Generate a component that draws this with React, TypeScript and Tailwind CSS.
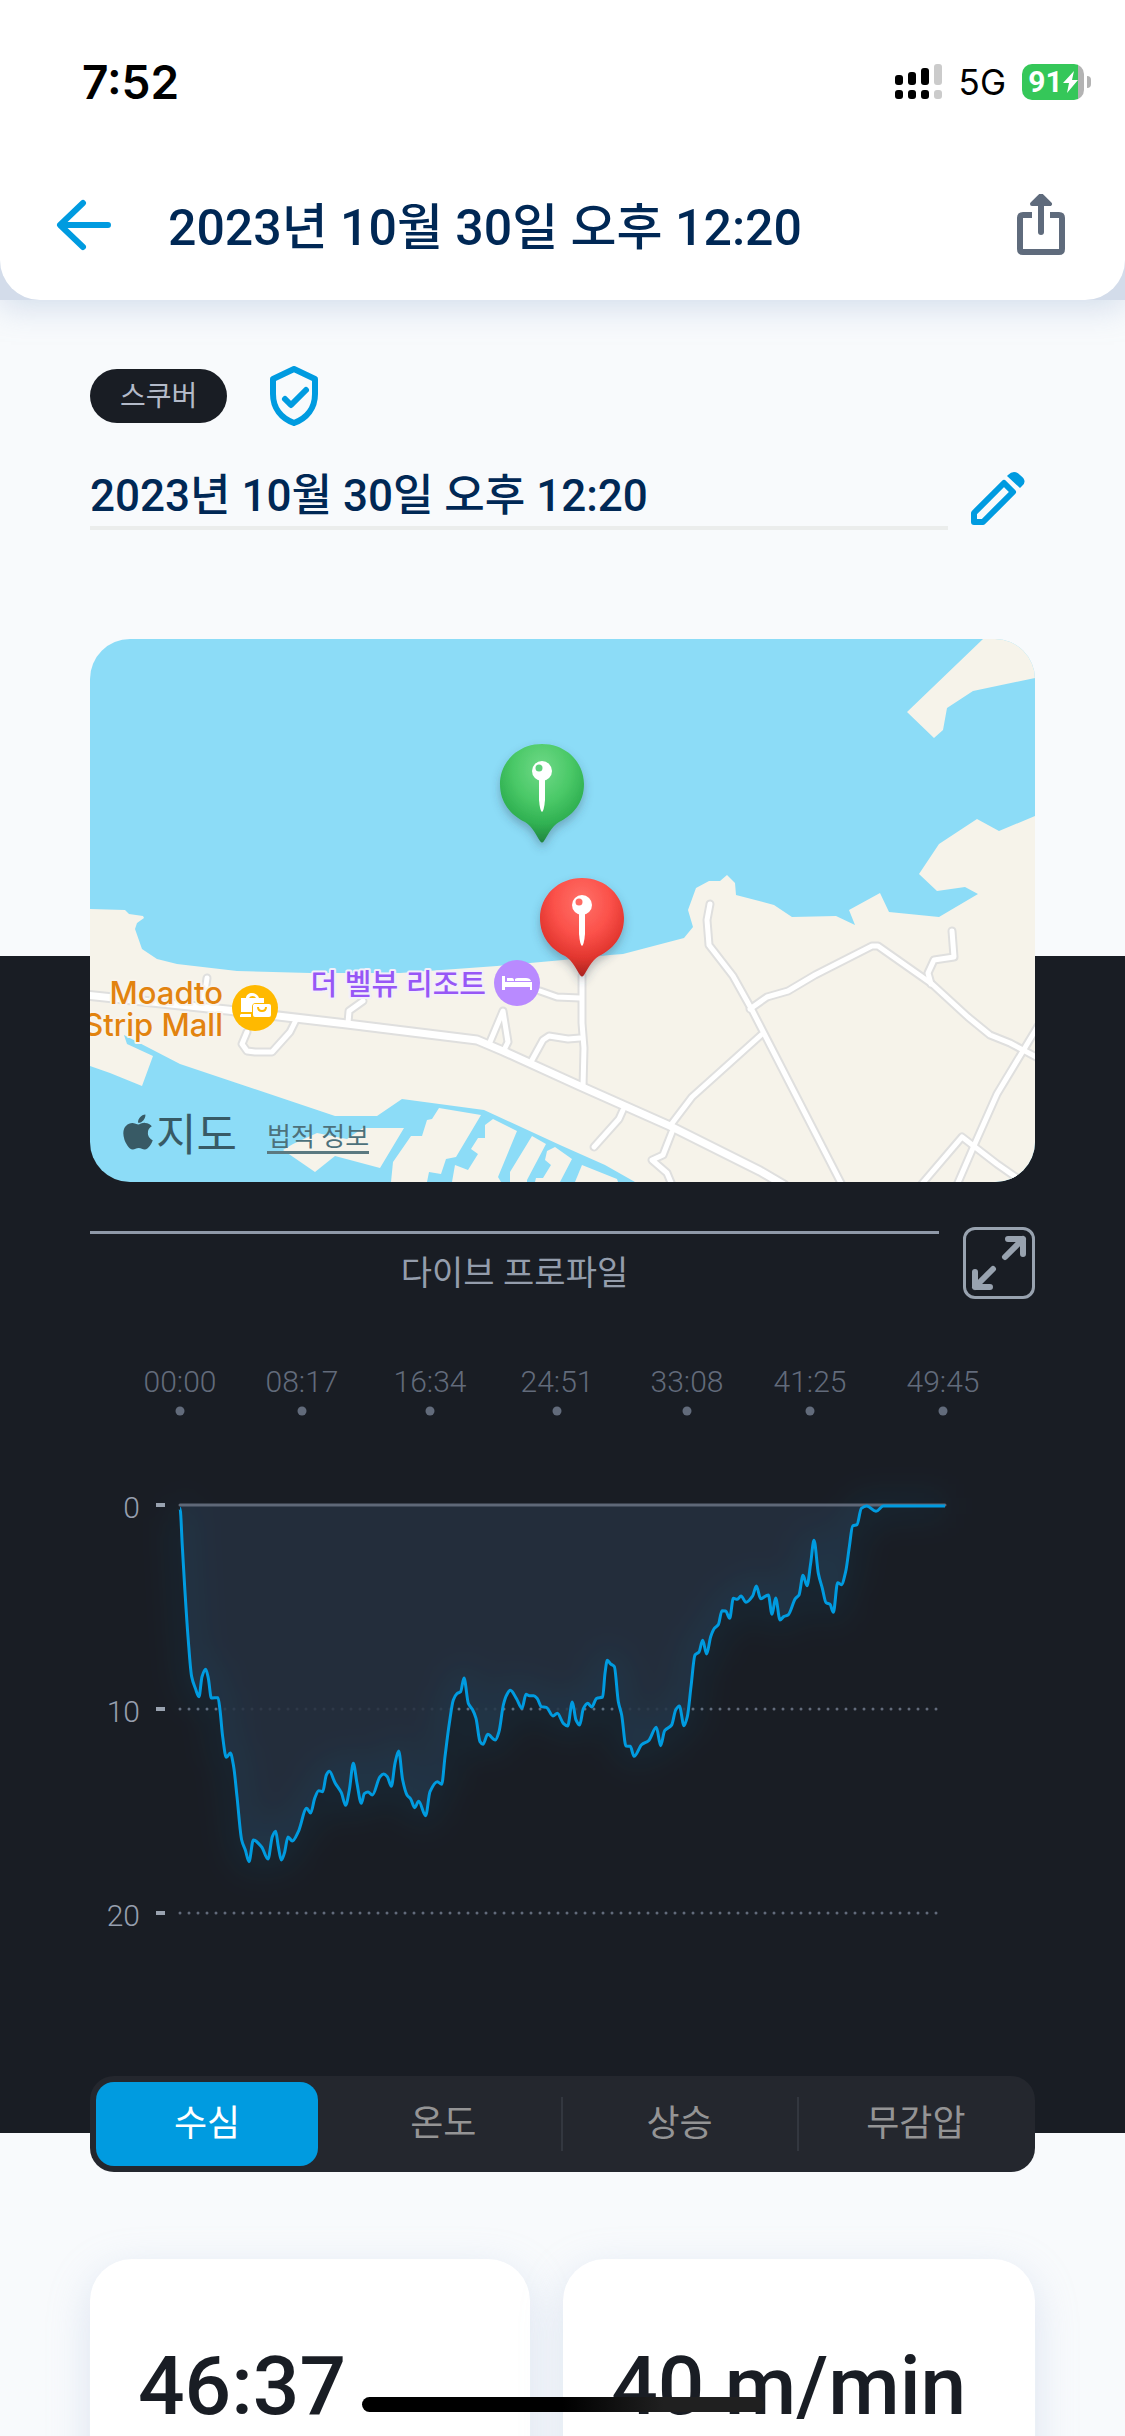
import React, { useState } from 'react';
import { FaApple } from 'react-icons/fa';
import clsx from 'clsx';

const TABS = [
  { id: 'depth', label: '수심' },
  { id: 'temp', label: '온도' },
  { id: 'ascent', label: '상승' },
  { id: 'ndl', label: '무감압' },
];

const TIMES = [
  { x: 90, label: '00:00' },
  { x: 212, label: '08:17' },
  { x: 340, label: '16:34' },
  { x: 467, label: '24:51' },
  { x: 597, label: '33:08' },
  { x: 720, label: '41:25' },
  { x: 853, label: '49:45' },
];

const DEPTHS = [
  { y: 145, label: '0' },
  { y: 349, label: '10' },
  { y: 553, label: '20' },
];

// Dive samples as x,y pairs on a grid three times finer than the plot
const SAMPLES = `270,115 277,230 284,350 294,500 305,620 316,655 327,680 336,620 347,598 355,625 364,684 384,683
390,720 398,800 409,862 421,849 431,890 441,980 455,1110 466,1140 477,1175 490,1110 515,1131 534,1167 547,1100
557,1084 565,1130 574,1170 583,1150 594,1101 607,1113 625,1085 650,1015 662,1029 674,985 686,962 698,965 709,915
718,904 735,938 754,968 767,1006 778,960 790,880 801,940 814,1000 823,971 834,966 847,975 870,920 881,912 892,920
904,949 915,880 926,843 938,930 951,975 962,987 974,1013 986,994 1007,1037 1020,965 1042,935 1055,943 1065,860
1078,760 1090,690 1101,671 1112,665 1122,624 1135,700 1147,718 1158,745 1170,815 1179,823 1193,793 1216,810
1227,785 1240,705 1250,675 1261,661 1280,687 1296,715 1308,673 1318,677 1331,677 1342,686 1354,710 1369,712
1389,738 1402,730 1420,760 1433,768 1447,696 1458,750 1469,765 1480,716 1493,700 1505,711 1520,685 1538,681
1545,610 1552,571 1562,582 1573,590 1585,695 1595,735 1608,828 1621,829 1632,859 1655,824 1676,812 1699,772
1712,827 1724,782 1745,765 1757,720 1768,708 1782,767 1792,740 1803,650 1815,555 1827,546 1838,511 1850,552
1862,500 1873,475 1885,464 1896,422 1907,423 1919,445 1930,385 1942,388 1953,378 1968,397 1988,378 1999,348
2012,386 2035,375 2046,433 2057,384 2070,450 2081,440 2095,434 2116,386 2127,375 2139,316 2151,347 2162,280
2172,211 2185,310 2197,355 2208,398 2220,403 2230,427 2243,338 2254,344 2267,305 2278,230 2288,168 2301,164
2314,115 2330,108 2358,124 2380,108 2565,108`
  .split(/\s+/)
  .map(pair => {
    const [x, y] = pair.split(',').map(Number);
    return [x / 3, y / 3 + 110];
  });

// Horizontal tangents at the peaks, sloped elsewhere
function smoothPath(pts: number[][]) {
  const slope = pts.map((p, i) => {
    if (i === 0 || i === pts.length - 1) return 0;
    const a = pts[i - 1];
    const b = pts[i + 1];
    const s1 = (p[1] - a[1]) / (p[0] - a[0]);
    const s2 = (b[1] - p[1]) / (b[0] - p[0]);
    if (s1 * s2 <= 0) return 0;
    return (2 * s1 * s2) / (s1 + s2);
  });
  let d = `M${pts[0][0]} ${pts[0][1]}`;
  for (let i = 1; i < pts.length; i++) {
    const a = pts[i - 1];
    const b = pts[i];
    const h = (b[0] - a[0]) / 3;
    d += `C${a[0] + h} ${a[1] + slope[i - 1] * h} ${b[0] - h} ${b[1] - slope[i] * h} ${b[0]} ${b[1]}`;
  }
  return d;
}

const LINE = smoothPath(SAMPLES);

const LAND = [
  'M0 270L35 271L39 275L53 277L54 279L47 284L45 290L52 310L67 320L87 325L147 332L220 334L310 334L407 327L473 321L520 316L533 315L594 299L603 288L598 271L606 249L619 242L630 242L637 236L645 244L646 256L684 266L702 278L746 277L765 286L759 271L790 254L799 273L849 278L888 255L875 248L847 252L829 235L849 205L887 180L909 192L945 177V543H545L515 526L470 506L394 471L312 460L287 477H245L90 425L34 396L37 405L63 417L52 447L20 434L0 427Z',
  'M893 0L817 73L844 99L853 91L857 69L883 52L945 39V0Z',
  'M193 511L225 533L245 517L290 529L314 489H273L257 500L227 494L203 505Z',
  'M301 543L303 523L321 497H332L337 481L342 480L349 469L391 476L366 518L356 520L351 535L339 533L337 543Z',
  'M362 543L365 526L378 531L388 515L381 510L388 499H395V486L403 480L427 492L408 538L411 543Z',
  'M420 543V533L442 497L456 505L437 541V543Z',
  'M445 543L446 539H453L461 526L455 521L457 512L465 508L482 520L470 543Z',
  'M485 543L492 526L527 540L528 543Z',
];

const ROADS = [
  'M157 393L152 405L157 412L165 413H182L200 393L207 379',
  'M117 339L113 366',
  'M258 384L259 372L273 362',
  'M400 403L413 372L418 403L414 411',
  'M442 421L453 401L459 397L478 400L490 399',
  'M450 352L467 358L490 359',
  'M492 337V384L494 409L493 448',
  'M533 471L529 480L504 508',
  'M580 487L602 458L671 396',
  'M582 493L573 516L562 521L577 534L582 546',
  'M620 265L617 281L619 306L643 337L662 371L752 546',
  'M660 370L677 358L698 352L725 336L782 307H788L842 345L878 378L900 396L920 404L948 419',
  'M862 292L864 318L844 321L838 334L841 345',
  'M948 387L907 455L883 509L867 546',
  'M831 546L872 498L907 525L930 541',
];

const MAIN_ROAD = 'M-4 356L137 371L257 385L387 401L413 412L490 447L580 487L620 507L670 532L694 546';

const PIN = 'M0-42C24-42 42-24 42-2C42 17 31 29 17 36C9 41 6 49 2 55Q0 58-2 55C-6 49-9 41-17 36C-31 29-42 17-42-2C-42-24-24-42 0-42Z';

function MapPin({ x, y, fill, dot }: { x: number; y: number; fill: string; dot: string }) {
  return (
    <g transform={`translate(${x} ${y})`}>
      <path d={PIN} fill={fill} filter="url(#pinShadow)" />
      <circle cy="-15" r="10" fill="#fff" />
      <path d="M-3-8H3V14Q2 25 0 26Q-2 25-3 14Z" fill="#fff" />
      <circle cx="-3" cy="-18" r="3.500" fill={dot} />
    </g>
  );
}

function StatusBar() {
  return (
    <div className="flex h-[164px] items-center justify-between pl-[82px] pr-[34px] text-black">
      <span className="font-['Inter'] text-[46px] font-semibold">7:52</span>
      <div className="flex items-center gap-4">
        <svg viewBox="0 0 48 36" className="h-9 w-12">
          <g fill="#000">
            <rect x="0" y="11" width="8" height="10" rx="3" />
            <rect x="13" y="8" width="8" height="13" rx="3" />
            <rect x="26" y="4" width="8" height="17" rx="3" />
            <rect x="0" y="26" width="8" height="9" rx="3" />
            <rect x="13" y="26" width="8" height="9" rx="3" />
            <rect x="26" y="26" width="8" height="9" rx="3" />
          </g>
          <rect x="39" y="0" width="8" height="21" rx="3" fill="#cbcbcb" />
          <rect x="39" y="26" width="8" height="9" rx="3" fill="#cbcbcb" />
        </svg>
        <span className="font-['Inter'] text-[35px]">5G</span>
        <div className="flex items-center gap-[3px]">
          <div className="flex h-9 w-[62px] items-center justify-center rounded-[10px] bg-[linear-gradient(to_right,#35c759_56px,#b3b3b3_56px)] text-white">
            <span className="text-[30px] font-bold leading-9">91</span>
            <svg viewBox="0 0 15 22" className="h-[22px] w-[15px]">
              <path d="M11 0L0 12H6L4 22L15 9H9Z" fill="#fff" />
            </svg>
          </div>
          <div className="h-3 w-1 rounded-r-full bg-[#b3b3b3]" />
        </div>
      </div>
    </div>
  );
}

function DiveMap() {
  return (
    <div className="relative h-[543px] overflow-hidden rounded-[40px] bg-[#8cdcf7]">
      <svg viewBox="0 0 945 543" preserveAspectRatio="xMidYMid slice" className="block h-full w-full">
        <defs>
          <radialGradient id="greenPin" cx="0.5" cy="0.25" r="0.75">
            <stop offset="0" stopColor="#6fd987" />
            <stop offset="0.45" stopColor="#4bc968" />
            <stop offset="0.75" stopColor="#30b152" />
            <stop offset="1" stopColor="#228540" />
          </radialGradient>
          <radialGradient id="redPin" cx="0.5" cy="0.25" r="0.75">
            <stop offset="0" stopColor="#ff7169" />
            <stop offset="0.45" stopColor="#fb514a" />
            <stop offset="0.75" stopColor="#e2362f" />
            <stop offset="1" stopColor="#a9241f" />
          </radialGradient>
          <filter id="pinShadow" x="-30%" y="-30%" width="160%" height="160%">
            <feDropShadow dx="0" dy="5" stdDeviation="5" floodColor="#334155" floodOpacity="0.35" />
          </filter>
        </defs>
        <g fill="#f6f3ea">
          {LAND.map(d => (
            <path key={d} d={d} />
          ))}
        </g>
        <g fill="none" strokeLinecap="round" strokeLinejoin="round">
          <g stroke="#dfdfde">
            {ROADS.map(d => (
              <path key={d} d={d} strokeWidth="9" />
            ))}
            <path d={MAIN_ROAD} strokeWidth="11" />
          </g>
          <g stroke="#fff">
            {ROADS.map(d => (
              <path key={d} d={d} strokeWidth="5" />
            ))}
            <path d={MAIN_ROAD} strokeWidth="7" />
          </g>
        </g>
        <g
          textAnchor="end"
          strokeWidth="4"
          strokeLinejoin="round"
          paintOrder="stroke"
          className="font-['Inter','Noto_Sans_CJK_KR',sans-serif] font-medium"
        >
          <g fill="#e2830f" stroke="#f8f4ec" className="text-[31px]">
            <text x="133" y="365">Moadto</text>
            <text x="133" y="397">Strip Mall</text>
          </g>
          <text x="396" y="356" fill="#9757f6" stroke="#f3effa" className="text-[29px]">
            더 벨뷰 리조트
          </text>
        </g>
        <circle cx="165" cy="369" r="23" fill="#ffb900" />
        <g fill="#fff">
          <path d="M151 359H156C156 356 159 354 162 354S168 356 169 359H174V364H166Q162 364 162 368V373H151ZM159 359H166Q165 357 162.500 357T159 359Z" />
          <path d="M151 375H161V378H150V376Z" />
          <path d="M164 365H179Q181 365 181 367V376Q181 378 179 378H165Q163 378 163 376V366Z" />
        </g>
        <path d="M168 368Q168 372 172 372T176 368" fill="none" stroke="#ffb900" strokeWidth="2" />
        <circle cx="427" cy="344" r="23" fill="#b98aff" />
        <path d="M412 337H415V343H442V351H440V348H415V351H412ZM417 339H422Q424 339 424 342H417ZM425 342V340Q426 339 428 339H436Q440 339 441 342Z" fill="#fff" />
        <MapPin x={452} y={147} fill="url(#greenPin)" dot="#5fd07a" />
        <MapPin x={492} y={281} fill="url(#redPin)" dot="#ff6b63" />
      </svg>
      <div className="absolute bottom-6 left-[30px] flex items-center text-[#385a65]">
        <FaApple className="h-10 w-9" />
        <span className="font-['Noto_Sans_CJK_KR',sans-serif] text-[44px] leading-[52px]">지도</span>
        <a href="#legal" className="ml-[30px] mt-3 border-b-[3px] border-[#5b7980] text-[26px] leading-7 text-[#4d717b]">
          법적 정보
        </a>
      </div>
    </div>
  );
}

function ProfileChart() {
  return (
    <svg viewBox="0 0 945 680" className="mt-[61px] block w-full overflow-visible">
      <defs>
        <filter id="glow" filterUnits="userSpaceOnUse" x="0" y="60" width="945" height="560">
          <feGaussianBlur stdDeviation="16" />
        </filter>
      </defs>
      <g textAnchor="middle" fill="#626b7b" className="text-[30px] font-light">
        {TIMES.map(t => (
          <g key={t.label}>
            <text x={t.x} y="32">{t.label}</text>
            <circle cx={t.x} cy="51" r="4.500" />
          </g>
        ))}
      </g>
      {DEPTHS.map(depth => (
        <g key={depth.label}>
          <text x="50" y={depth.y + 13} textAnchor="end" fill="#969fae" className="text-[30px] font-light">
            {depth.label}
          </text>
          <path d={`M66 ${depth.y}H75`} stroke="#9aa3b0" strokeWidth="4" />
          {depth.y > 145 && (
            <path d={`M90 ${depth.y}H847`} stroke="#626b7b" strokeWidth="3" strokeLinecap="round" strokeDasharray="0 9" />
          )}
        </g>
      ))}
      <path d={`${LINE}V146H90Z`} fill="#26303f" fillOpacity="0.85" />
      <path d={LINE} fill="none" stroke="#009be0" strokeWidth="24" strokeOpacity="0.07" filter="url(#glow)" />
      <path d="M90 145H855" stroke="#5f6878" strokeWidth="3" strokeLinecap="round" />
      <path d={LINE} fill="none" stroke="#009be0" strokeWidth="3" strokeLinejoin="round" />
    </svg>
  );
}

export default function App() {
  const [activeTab, setActiveTab] = useState('depth');

  return (
    <div className="relative flex h-screen flex-col overflow-hidden bg-[#f8fafc] font-['Roboto','Noto_Sans_CJK_KR',sans-serif]">
      <div className="relative z-10 shrink-0 bg-[#d3dcea] shadow-[0_6px_32px_rgba(150,175,210,0.4)]">
        <header className="rounded-b-[40px] bg-white">
          <StatusBar />
          <div className="flex h-[136px] items-center px-14 pb-3">
            <button type="button" aria-label="뒤로">
              <svg viewBox="0 0 56 56" className="block h-14 w-14" fill="none" stroke="#009be0" strokeWidth="6" strokeLinecap="round" strokeLinejoin="round">
                <path d="M27 5L4 27L27 49M5 27H52" />
              </svg>
            </button>
            <h1 className="ml-14 flex-1 pt-1 text-[50px] font-medium leading-[60px] text-[#002855]">2023년 10월 30일 오후 12:20</h1>
            <button type="button" aria-label="공유">
              <svg viewBox="0 0 56 64" className="block h-16 w-14" fill="none" stroke="#5f6b7c" strokeWidth="6" strokeLinejoin="round">
                <path d="M19 21H10Q7 21 7 24V55Q7 58 10 58H46Q49 58 49 55V24Q49 21 46 21H37" strokeLinecap="butt" />
                <path d="M28 6V38" strokeLinecap="round" />
                <path d="M19 10L28 1L37 10Z" fill="#5f6b7c" strokeWidth="4" />
              </svg>
            </button>
          </div>
        </header>
      </div>

      <main className="flex-1 overflow-hidden">
        <div className="px-[90px] pt-[66px]">
          <div className="flex items-center gap-9">
            <span className="flex h-[54px] items-center rounded-full bg-[#191d24] px-[30px] pt-0.5 text-[28px] text-[#b3bac9]">스쿠버</span>
            <svg viewBox="0 0 60 60" className="h-[60px] w-[60px]" fill="none" stroke="#009be0" strokeWidth="6" strokeLinecap="round" strokeLinejoin="round">
              <path d="M31 3L52 13V28C52 42 44 52 31 57C18 52 10 42 10 28V13Z" />
              <path d="M22 33L28 39L43 24" />
            </svg>
          </div>
          <div className="mt-8 flex items-center">
            <h2 className="flex-1 border-b-4 border-[#ebedec] pt-2 text-[44px] font-medium leading-[60px] text-[#002855]">
              2023년 10월 30일 오후 12:20
            </h2>
            <button type="button" aria-label="제목 편집" className="ml-[22px] mr-2.5 mt-2">
              <svg viewBox="0 0 55 55" className="block h-[55px] w-[55px]">
                <path d="M4 42L34 12L43 21L13 51H4Z" fill="none" stroke="#009be0" strokeWidth="6" strokeLinejoin="round" />
                <path d="M38 4Q44-2 50 4Q58 10 52 15L50 17L37 5Z" fill="#009be0" />
              </svg>
            </button>
          </div>
        </div>

        <div className="mt-[109px] bg-[linear-gradient(to_bottom,transparent_317px,#191d24_317px,#191d24_calc(100%_-_39px),transparent_calc(100%_-_39px))] px-[90px]">
          <DiveMap />
          <div className="mt-[45px] flex items-start gap-6">
            <div className="mt-1 flex-1 border-t-[3px] border-[#8f99a8] pt-[17px] text-center text-[34px] leading-[44px] text-[#949dac]">
              다이브 프로파일
            </div>
            <button type="button" aria-label="전체 화면" className="flex h-[72px] w-[72px] items-center justify-center rounded-xl border-[3px] border-[#98a2af]">
              <svg viewBox="0 0 66 66" className="h-[66px] w-[66px]" fill="none" stroke="#98a2af" strokeWidth="6" strokeLinecap="round" strokeLinejoin="round">
                <path d="M39 27L57 9M42 9H57V24M27 39L9 57M9 42V57H24" />
              </svg>
            </button>
          </div>
          <ProfileChart />
          <div role="tablist" className="mt-9 grid h-24 grid-cols-4 rounded-[24px] bg-[#24272e]">
            {TABS.map((tab, i) => (
              <button
                key={tab.id}
                type="button"
                role="tab"
                aria-selected={activeTab === tab.id}
                onClick={() => setActiveTab(tab.id)}
                className={clsx('flex items-center', activeTab === tab.id ? 'text-white' : 'text-[#949495]')}
              >
                <span
                  className={clsx(
                    'ml-1.5 mr-2 flex h-[84px] flex-1 items-center justify-center rounded-[18px] text-[36px]',
                    activeTab === tab.id && 'bg-[#009be0]'
                  )}
                >
                  {tab.label}
                </span>
                {(i === 1 || i === 2) && <span className="-ml-0.5 h-[54px] w-0.5 bg-[#33373f]" />}
              </button>
            ))}
          </div>
        </div>

        <div className="grid grid-cols-[14fr_15fr] gap-[33px] px-[90px] pt-[87px] text-[82px] font-medium leading-[96px] text-[#191d24]">
          <div className="rounded-[42px] bg-white px-12 pb-20 pt-[79px] shadow-[0_12px_40px_rgba(170,190,220,0.35)]">46:37</div>
          <div className="whitespace-nowrap rounded-[42px] bg-white px-12 pb-20 pt-[79px] shadow-[0_12px_40px_rgba(170,190,220,0.35)]">40 m/min</div>
        </div>
      </main>

      {/* home indicator */}
      <div className="absolute bottom-6 left-1/2 z-20 h-[15px] w-[402px] -translate-x-1/2 rounded-full bg-[linear-gradient(to_right,#000_50%,#202020_75%)]" />
    </div>
  );
}
